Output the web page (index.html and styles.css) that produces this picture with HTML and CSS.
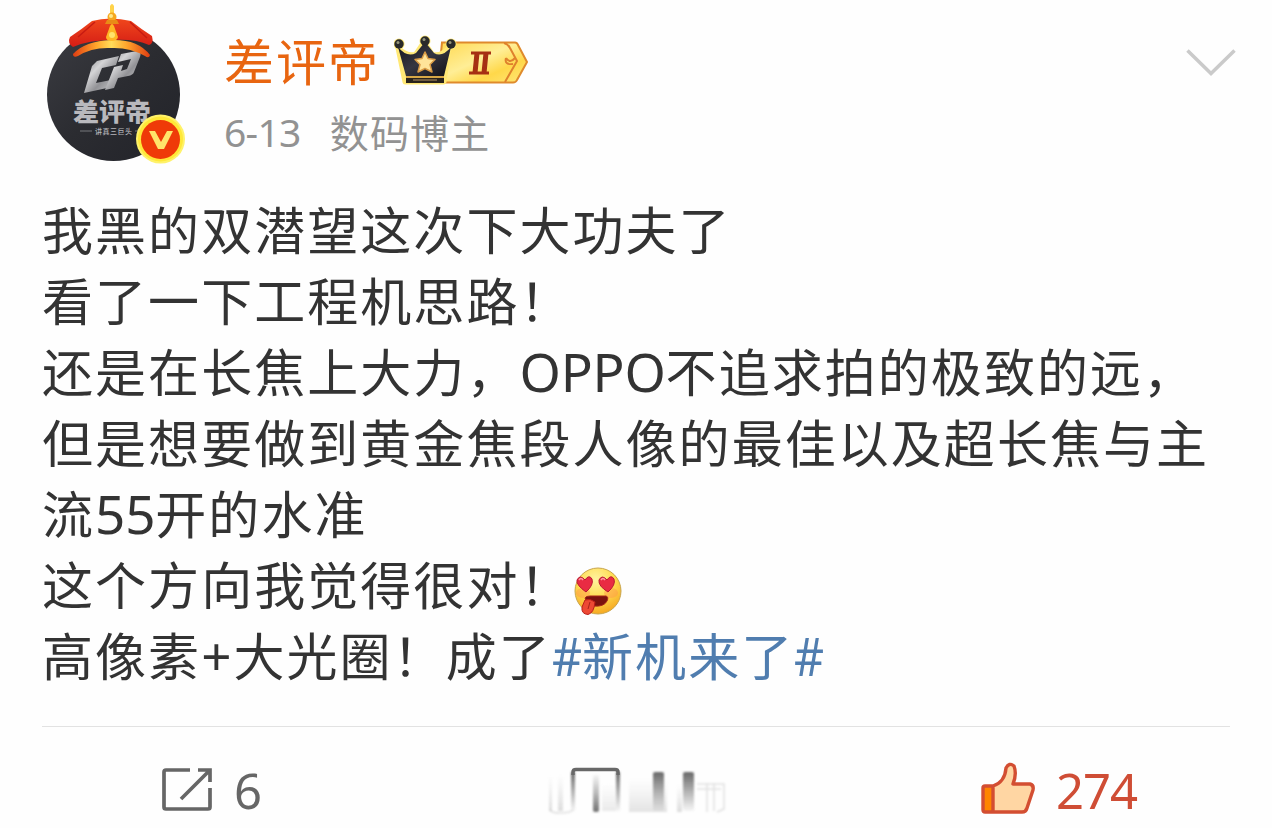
FILE: index.html
```html
<!DOCTYPE html>
<html lang="zh-CN">
<head>
<meta charset="utf-8">
<title>差评帝</title>
<link rel="stylesheet" href="styles.css">
</head>
<body>
<article class="post">
  <header class="head">
    <svg class="avatar" viewBox="0 0 170 175">
      <defs>
        <linearGradient id="disc" x1="0" y1="0" x2="1" y2="1"><stop offset="0" stop-color="#3b3c42"/><stop offset=".5" stop-color="#2b2c31"/><stop offset="1" stop-color="#222329"/></linearGradient>
        <linearGradient id="steel" x1="0" y1="0" x2="1" y2="1"><stop offset="0" stop-color="#77787c"/><stop offset=".35" stop-color="#d4d4d6"/><stop offset=".6" stop-color="#929296"/><stop offset="1" stop-color="#dadadc"/></linearGradient>
        <linearGradient id="hat" x1="0" y1="0" x2="0" y2="1"><stop offset="0" stop-color="#f0471c"/><stop offset="1" stop-color="#d51d15"/></linearGradient>
        <linearGradient id="brim" x1="0" y1="0" x2="1" y2="0"><stop offset="0" stop-color="#df3d12"/><stop offset=".3" stop-color="#ffa52b"/><stop offset=".5" stop-color="#ffdd5a"/><stop offset=".7" stop-color="#ffa52b"/><stop offset="1" stop-color="#df3d12"/></linearGradient>
      </defs>
      <circle cx="83.500" cy="94.500" r="66.500" fill="url(#disc)"/>
      <path d="M67 61 89 56 86 65 72 68 66 83 81 80 77 88 54 93 62 66Z" fill="url(#steel)"/>
      <path d="M91 54 107 51Q112 51 110 57L104 72Q103 75 98 76L88 78 84 88 75 90 84 67 93 65 91 71 97 69 101 59 88 62Z" fill="url(#steel)"/>
      <text class="avatar-name" x="43" y="121" textLength="78" lengthAdjust="spacingAndGlyphs" fill="#b9b9bd">差评帝</text>
      <path d="M50 131H62M105 131H109" stroke="#77787d"/>
      <text class="avatar-sub" x="65" y="134" textLength="37" fill="#b5b5ba">讲真三巨头</text>
      <path d="M40 37Q52 29 62 21Q80 16 101 21Q111 29 122 36Q124 44 119 45Q106 39 84 40Q58 40 43 47Q37 43 40 37Z" fill="url(#hat)"/>
      <path d="M65 22 48 37M100 22 117 38" stroke="#c81b12" stroke-width="1.500" fill="none"/>
      <path d="M43 54Q55 41 81 40Q108 39 120 55Q119 59 115 56Q99 47 81 48Q62 47 48 56Q43 58 43 54Z" fill="url(#brim)"/>
      <path d="M80 6Q82 2 84 6V14H80Z" fill="#ffd34a"/>
      <circle cx="82" cy="17" r="4.500" fill="#f6a71f"/><circle cx="81" cy="16" r="2" fill="#ffe98a"/>
      <path d="M77 20H87L89 24H75Z" fill="#e98b16"/>
      <path d="M80 26Q82 22 84 26L88 37Q87 41 82 41Q76 41 76 37Z" fill="#ffb524"/><circle cx="82" cy="35" r="3" fill="#ffe36b"/>
      <circle cx="130.500" cy="139" r="24.500" fill="#fff26a"/>
      <circle cx="130.500" cy="139" r="22.500" fill="#ffe838"/>
      <circle cx="130.500" cy="139.500" r="19.500" fill="#ef3a08"/>
      <path d="M119 131H125L131 142 137 131H143L134 149H128Z" fill="#ffe36a"/>
    </svg>
    <div class="who">
      <div class="name-row">
        <span class="name">差评帝</span>
        <svg class="vip" viewBox="0 0 140 54">
          <defs>
            <linearGradient id="gold" x1="0" y1="0" x2="1" y2="1"><stop offset="0" stop-color="#ffd84e"/><stop offset=".45" stop-color="#ffee96"/><stop offset=".7" stop-color="#ffd84a"/><stop offset="1" stop-color="#ffe678"/></linearGradient>
            <linearGradient id="crown" x1="0" y1="0" x2="1" y2="1"><stop offset="0" stop-color="#15151b"/><stop offset=".5" stop-color="#363641"/><stop offset="1" stop-color="#111116"/></linearGradient>
          </defs>
          <path d="M48 8.500H121Q123 8.500 124 11L133 28 123 46Q122 48.500 119 48.500H44Z" fill="url(#gold)" stroke="#df8a2c" stroke-width="2"/>
          <path d="M110 9Q114 10 116 14L123 27 111 48M112 24Q116 30 121 24M112 24Q110 31 119 30" fill="none" stroke="#df812c" stroke-width="2"/>
          <g stroke="#ffe875" stroke-width="5" stroke-linejoin="round"><path d="M4 14Q14 23 22 20L30 8 38 20Q46 23 55 14L50 48H11Z" fill="#ffe875"/><circle cx="5" cy="10" r="3"/><circle cx="31" cy="7" r="3"/><circle cx="57" cy="10" r="3"/></g>
          <path d="M4 13Q13 24 22 19L31 8 40 19Q48 24 57 13L50 42H12Z" fill="url(#crown)"/>
          <path d="M12 43H50" stroke="#d7a746" stroke-width="2"/><path d="M12 46.500H50" stroke="#29231c" stroke-width="5"/><path d="M19 46H43" stroke="#88704b" stroke-width="1.500"/>
          <g fill="#292929"><circle cx="5" cy="10" r="4.700"/><circle cx="31" cy="7" r="4.700"/><circle cx="57" cy="10" r="4.700"/></g>
          <g fill="#969679"><circle cx="4" cy="8.500" r="1.500"/><circle cx="30" cy="5.500" r="1.500"/><circle cx="56" cy="8.500" r="1.500"/></g>
          <path d="M31 18 34 24.500 41 25.500 36 30.500 38 38 31 34.500 24 38 26 30.500 21 25.500 28 24.500Z" fill="#ffe49a" stroke="#d99b45" stroke-width="1.500" stroke-linejoin="round"/>
          <path d="M77 19H97M75 39H95" stroke="#a63013" stroke-width="3"/><path d="M83 19 81 39M92 19 90 39" stroke="#a63013" stroke-width="5"/>
        </svg>
      </div>
      <div class="meta"><span class="date">6-13</span><span>数码博主</span></div>
    </div>
    <svg class="chevron" viewBox="0 0 50 28"><path d="M1.500 1.500 25 24.500 48.500 1.500" fill="none" stroke="#cacaca" stroke-width="3.500"/></svg>
  </header>
  <div class="content">
    <p>我黑的双潜望这次下大功夫了</p>
    <p>看了一下工程机思路！</p>
    <p>还是在长焦上大力，<span class="latin">OPPO</span>不追求拍的极致的远，</p>
    <p>但是想要做到黄金焦段人像的最佳以及超长焦与主</p>
    <p>流<span class="latin">55</span>开的水准</p>
    <p>这个方向我觉得很对！<svg class="emoji" viewBox="0 0 50 50">
      <defs><radialGradient id="face" cx=".45" cy=".25" r=".8"><stop offset="0" stop-color="#fff3a0"/><stop offset=".5" stop-color="#ffdc50"/><stop offset="1" stop-color="#f5a21c"/></radialGradient></defs>
      <circle cx="25" cy="25" r="23" fill="url(#face)" stroke="#c9a54c"/>
      <ellipse cx="10" cy="27" rx="7" ry="5" fill="#ff944c" opacity=".45"/><ellipse cx="38" cy="27" rx="7" ry="5" fill="#ff944c" opacity=".45"/>
      <path d="M13 26Q3 19 4 14Q7 8 12 14Q16 8 19 13Q21 19 13 26Z" fill="#e92b43" stroke="#b91a31"/>
      <path d="M35 26Q25 20 26 14Q29 8 34 14Q38 8 41 13Q43 19 35 26Z" fill="#e92b43" stroke="#b91a31"/>
      <path d="M6 14Q8 11 10 14M28 14Q30 11 32 14" stroke="#ff99a4" stroke-width="1.500" fill="none"/>
      <path d="M12 32Q13 30 17 30H33Q36 31 34 35Q31 41 21 40Q14 39 12 32Z" fill="#7b120e" stroke="#a72519"/>
      <path d="M12 34Q17 32 22 36Q21 47 15 48.500Q8 48 9 41Z" fill="#ed4934" stroke="#b91d18"/><path d="M17 36 15 43" stroke="#a9231a"/>
    </svg></p>
    <p>高像素<span class="latin plus">+</span>大光圈！成了<span class="topic"><span class="latin hash">#</span>新机来了<span class="latin hash">#</span></span></p>
  </div>
  <footer class="actions">
    <div class="action share">
      <svg class="share-icon" viewBox="0 0 50 44"><path d="M28 2H4Q2 2 2 4V39Q2 41 4 41H46Q48 41 48 39V20M36 2H48V14M47 3 19 31" fill="none" stroke="#666" stroke-width="3.700"/></svg>
      <span>6</span>
    </div>
    <div class="action comment">
      <svg class="comment-icon" viewBox="0 0 190 54">
        <defs>
          <linearGradient id="fadeDown" x1="0" y1="0" x2="0" y2="1"><stop offset="0" stop-color="#686868"/><stop offset="1" stop-color="#777" stop-opacity=".06"/></linearGradient>
          <linearGradient id="fadeUp" x1="0" y1="1" x2="0" y2="0"><stop offset="0" stop-color="#707070"/><stop offset="1" stop-color="#888" stop-opacity=".08"/></linearGradient>
          <linearGradient id="haze" x1="0" y1="0" x2="0" y2="1"><stop offset="0" stop-color="#bbb" stop-opacity="0"/><stop offset="1" stop-color="#aaa" stop-opacity=".4"/></linearGradient>
          <filter id="soft"><feGaussianBlur stdDeviation="1.100"/></filter>
        </defs>
        <g filter="url(#soft)">
          <rect x="9" y="8" width="3" height="36" fill="url(#haze)"/><rect x="18" y="8" width="5" height="36" fill="url(#haze)"/>
          <rect x="31" y="5" width="4" height="39" fill="url(#fadeDown)"/><rect x="76" y="5" width="4" height="39" fill="url(#fadeDown)"/>
          <rect x="53" y="8" width="6" height="37" rx="2" fill="url(#fadeUp)"/>
          <rect x="62" y="16" width="14" height="28" fill="url(#haze)" opacity=".6"/>
          <rect x="89" y="12" width="38" height="33" fill="url(#haze)" opacity=".8"/>
          <rect x="113" y="5" width="11" height="39" rx="2" fill="url(#fadeDown)"/><rect x="143" y="5" width="11" height="39" rx="2" fill="url(#fadeDown)"/>
          <rect x="137" y="18" width="5" height="27" fill="url(#haze)"/>
          <path d="M10 43Q12 46 20 46Q30 46 33 43M157 17H184V25M157 22H181M167 17V45M174 17V44M184 25V42L177 45" fill="none" stroke="#aaa" stroke-opacity=".35" stroke-width="1.500"/>
        </g>
        <path d="M33 8V5Q33 2.500 36 2.500H75Q78 2.500 78 5V8" fill="none" stroke="#686868" stroke-width="3.500"/>
      </svg>
    </div>
    <div class="action like">
      <svg class="like-icon" viewBox="0 0 56 54">
        <path d="M13 24Q25 20 26 6Q29 0 34 4Q37 12 33 22H50Q54 23 53 28L47 46Q46 50 42 50H13Z" fill="#ffd6a3"/>
        <path d="M3 24H13V50H5Q3 50 3 48Z" fill="#ff8500"/>
        <path d="M13 24Q25 20 26 6Q29 0 34 4Q37 12 33 22H50Q54 23 53 28L47 46Q46 50 42 50H5Q3 50 3 48V26Q3 24 5 24H13V50" fill="none" stroke="#d34e32" stroke-width="3.400" stroke-linejoin="round"/>
      </svg>
      <span>274</span>
    </div>
  </footer>
</article>
</body>
</html>
```
FILE: styles.css
```css
body {
  margin: 0;
  background: #fefefe;
  overflow: hidden;
  font-family: "Noto Sans CJK SC", sans-serif;
}
.post {
  width: 1272px;
  height: 828px;
  box-sizing: border-box;
}
.head {
  display: flex;
  height: 193px;
  padding-left: 30px;
  box-sizing: border-box;
}
.avatar { width: 170px; height: 175px; }
.avatar-name { font-size: 25px; font-weight: 900; }
.avatar-sub { font-size: 7px; font-weight: 500; }
.who { margin-left: 24px; padding-top: 24px; }
.name-row { display: flex; height: 74px; }
.name {
  color: #e86510;
  font-size: 50px;
  line-height: 70px;
  letter-spacing: 2px;
}
.vip { width: 140px; height: 54px; margin: 10px 0 0 14px; }
.meta {
  display: flex;
  gap: 29px;
  color: #929292;
  font-size: 39px;
  line-height: 66px;
  letter-spacing: 1.200px;
}
.date { font-family: "Noto Sans", sans-serif; letter-spacing: -.700px; padding-top: 1px; }
.chevron { width: 50px; height: 28px; margin: 49px 36px 0 auto; }
.content {
  padding-left: 42px;
  color: #333;
  font-size: 51px;
  letter-spacing: 2.050px;
  white-space: nowrap;
}
.content p { height: 71px; margin: 0; line-height: 71px; }
.latin {
  font-family: "Noto Sans", sans-serif;
  font-size: 53px;
  line-height: 1;
  letter-spacing: -.200px;
}
.plus { letter-spacing: 2px; }
.hash { display: inline-block; transform: scaleX(.88); transform-origin: left; letter-spacing: -4px; }
.topic { color: #507daf; }
.emoji { width: 50px; height: 50px; vertical-align: -11px; }
.actions {
  display: flex;
  height: 100px;
  margin: 36px 42px 0;
  border-top: 1px solid #e2e2e2;
  color: #666;
  font-family: "Noto Sans", sans-serif;
  font-size: 49px;
  line-height: 64px;
}
.action { display: flex; align-items: flex-start; padding-top: 31px; }
.share { width: 378px; padding-left: 120px; box-sizing: border-box; gap: 22px; }
.share-icon { width: 50px; height: 44px; margin-top: 10px; }
.comment { padding-left: 120px; }
.comment-icon { width: 190px; height: 54px; margin-top: 9px; }
.like { margin-left: auto; margin-right: 93px; gap: 20px; color: #cf4d35; letter-spacing: -1px; }
.like-icon { width: 56px; height: 54px; margin-top: 4px; }
```
